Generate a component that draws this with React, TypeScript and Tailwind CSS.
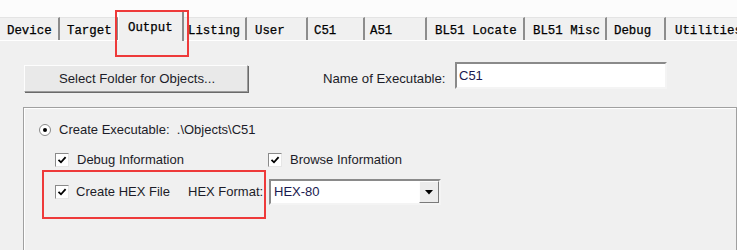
import React from 'react'

type Tab = { label: string; w: number; pl: number; active?: boolean }

const tabs: Tab[] = [
  { label: 'Device', w: 60, pl: 7 },
  { label: 'Target', w: 58, pl: 7 },
  { label: 'Output', w: 66, pl: 9, active: true },
  { label: 'Listing', w: 63, pl: 4 },
  { label: 'User', w: 61, pl: 8 },
  { label: 'C51', w: 57, pl: 6 },
  { label: 'A51', w: 62, pl: 5 },
  { label: 'BL51 Locate', w: 98, pl: 8 },
  { label: 'BL51 Misc', w: 82, pl: 8 },
  { label: 'Debug', w: 59, pl: 7 },
  { label: 'Utilities', w: 80, pl: 9 },
]

const ui = { fontFamily: '"Liberation Sans", Arial, sans-serif' }
const mono = { fontFamily: '"Liberation Mono", "Courier New", monospace' }

function CheckBox() {
  return (
    <span className="inline-flex w-[14px] h-[14px] bg-white border border-t-[#8a8a8a] border-l-[#8a8a8a] border-r-[#e6e6e6] border-b-[#e6e6e6] items-center justify-center shrink-0">
      <svg width="10" height="10" viewBox="0 0 10 10" aria-hidden="true">
        <path d="M1.5 4.8 L4 7.3 L8.6 2.2" fill="none" stroke="#000" strokeWidth="1.8" />
      </svg>
    </span>
  )
}

function Radio() {
  return (
    <span className="inline-flex w-[12px] h-[12px] rounded-full bg-white border border-[#8a8a8a] items-center justify-center shrink-0">
      <span className="w-[4px] h-[4px] rounded-full bg-black" />
    </span>
  )
}

export default function App() {
  return (
    <div className="relative w-[737px] h-[250px] overflow-hidden bg-[#f0f0f0] text-[13px] text-[#1c1c28]" style={ui}>
      {/* tab strip */}
      <div className="flex items-end h-[41px] bg-[#fcfcfc] border-b border-white">
        {tabs.map((t) =>
          t.active ? (
            <div
              key={t.label}
              className="h-[31px] shrink-0 bg-[#f0f0f0] border-t border-l border-t-white border-l-white border-r-2 border-r-[#8c8c8c] flex items-start pt-[11px] -mb-px"
              style={{ width: t.w, paddingLeft: t.pl }}
            >
              <span className="text-[12.4px] text-black leading-none [-webkit-text-stroke:0.25px_#000]" style={mono}>{t.label}</span>
            </div>
          ) : (
            <div
              key={t.label}
              className="h-[23px] shrink-0 bg-[#f0f0f0] border-t border-t-[#e4e4e4] border-r-2 border-r-[#8c8c8c] flex items-center pt-[5px]"
              style={{ width: t.w, paddingLeft: t.pl }}
            >
              <span className="text-[12.4px] text-black leading-none whitespace-nowrap [-webkit-text-stroke:0.25px_#000]" style={mono}>{t.label}</span>
            </div>
          )
        )}
      </div>

      {/* top row */}
      <div className="flex items-start mt-[21px] pl-[24px]">
        <button className="mt-[3px] w-[224px] h-[27px] bg-[#e9e9e9] border border-t-[#fdfdfd] border-l-[#fdfdfd] border-r-[#9c9c9c] border-b-[#9c9c9c] shadow-[1px_1px_0_#6a6a6a] text-[13.2px] text-[#1c1c28] flex items-center justify-center pl-[2px]">
          Select Folder for Objects...
        </button>
        <span className="ml-[75px] w-[132px] mt-[7px] text-[13.2px]">Name of Executable:</span>
        <div className="w-[212px] h-[27px] bg-white border-2 border-t-[#8a8a8a] border-l-[#8a8a8a] border-r-[#f4f4f4] border-b-[#f4f4f4] pl-[2px] pt-[2px] text-[#1a1a50]">
          C51
        </div>
      </div>

      {/* group box */}
      <div className="ml-[23px] mt-[15px] w-[714px] h-[160px] border border-[#a0a0a0] shadow-[inset_1px_1px_0_#ffffff]">
        <div className="flex items-center pl-[15px] mt-[15px] h-[14px]">
          <Radio />
          <span className="ml-[8px]">Create Executable:&nbsp;&nbsp;.\Objects\C51</span>
        </div>
        <div className="flex items-center mt-[16px] pl-[31px] h-[14px]">
          <CheckBox />
          <span className="ml-[8px] w-[191px]">Debug Information</span>
          <CheckBox />
          <span className="ml-[8px]">Browse Information</span>
        </div>
        <div className="flex items-center mt-[12px] pl-[31px] h-[26px]">
          <CheckBox />
          <span className="ml-[7px] w-[112px]">Create HEX File</span>
          <span className="w-[81px]">HEX Format:</span>
          <div className="flex items-center w-[172px] h-[26px] bg-white border-2 border-t-[#8a8a8a] border-l-[#8a8a8a] border-r-[#f4f4f4] border-b-[#f4f4f4]">
            <span className="flex-1 pl-[3px] text-[#1a1a50]">HEX-80</span>
            <div className="w-[20px] h-[22px] bg-[#ececec] border border-t-[#fdfdfd] border-l-[#fdfdfd] border-r-[#7a7a7a] border-b-[#7a7a7a] flex items-center justify-center">
              <svg width="8" height="5" viewBox="0 0 8 5" aria-hidden="true">
                <path d="M0 0 H8 L4 4.5 Z" fill="#000" />
              </svg>
            </div>
          </div>
        </div>
      </div>

      {/* annotation boxes */}
      <div className="absolute left-[115px] top-[10px] w-[74px] h-[47px] border-2 border-[#ee3a3a]" />
      <div className="absolute left-[42px] top-[170px] w-[224px] h-[49px] border-2 border-[#ee3a3a]" />
    </div>
  )
}
